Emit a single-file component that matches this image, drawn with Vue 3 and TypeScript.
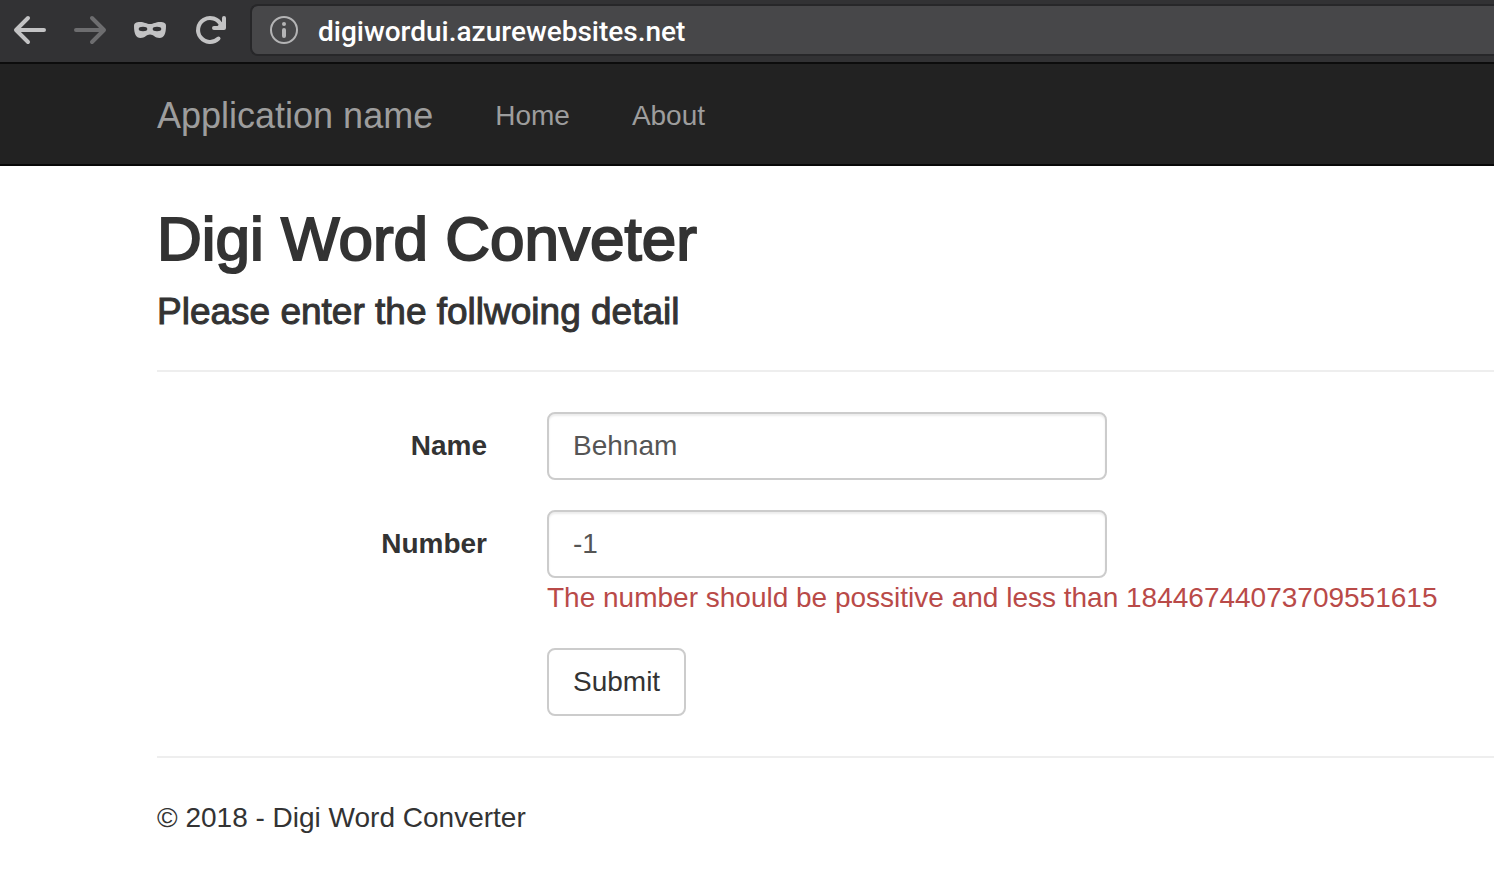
<script setup lang="ts">
import { ref } from 'vue'

const address = ref('digiwordui.azurewebsites.net')
const name = ref('Behnam')
const number = ref('-1')
const numberError = 'The number should be possitive and less than 18446744073709551615'
</script>

<template>
  <div class="page">
    <div class="toolbar">
      <button class="tool" type="button" aria-label="Back">
        <svg width="40" height="40" viewBox="0 0 40 40" fill="none" stroke="#c3c3c4" stroke-width="4" stroke-linecap="round" stroke-linejoin="round">
          <path d="M34 20H7M18 8L6 20L18 32" />
        </svg>
      </button>
      <button class="tool" type="button" aria-label="Forward">
        <svg width="40" height="40" viewBox="0 0 40 40" fill="none" stroke="#6d6d6f" stroke-width="4" stroke-linecap="round" stroke-linejoin="round">
          <path d="M6 20H33M22 8L34 20L22 32" />
        </svg>
      </button>
      <svg class="mask" width="40" height="40" viewBox="0 0 40 40" aria-hidden="true">
        <path fill="#c3c3c4" d="M4 16C4 13 6 12 10 12C14.500 12 16.500 14 20 14C23.500 14 25.500 12 30 12C34 12 36 13 36 16C36 24 34 28 29.500 28C25 28 23.500 24.500 20 24.500C16.500 24.500 15 28 10.500 28C6 28 4 24 4 16Z" />
        <ellipse cx="13" cy="19" rx="4.300" ry="2.200" fill="#323234" />
        <ellipse cx="27" cy="19" rx="4.300" ry="2.200" fill="#323234" />
      </svg>
      <button class="tool" type="button" aria-label="Reload">
        <svg width="40" height="40" viewBox="0 0 40 40" fill="none" stroke="#c3c3c4" stroke-width="4" stroke-linecap="round" stroke-linejoin="round">
          <path d="M28.500 28.500A12 12 0 1 1 31 15" />
          <path d="M34 8V18H24" />
          <path d="M33 12V17H28Z" fill="#c3c3c4" stroke-width="2" />
        </svg>
      </button>
      <div class="address">
        <svg width="28" height="28" viewBox="0 0 28 28" fill="none" aria-hidden="true">
          <circle cx="14" cy="14" r="13" stroke="#b4b4b5" stroke-width="2" />
          <circle cx="14" cy="8" r="2" fill="#b4b4b5" />
          <path d="M14 14V20" stroke="#b4b4b5" stroke-width="4" stroke-linecap="round" />
        </svg>
        <input v-model="address" class="url" type="text" aria-label="Address" spellcheck="false">
      </div>
    </div>

    <nav class="navbar">
      <a class="brand" href="#">Application name</a>
      <a href="#">Home</a>
      <a href="#">About</a>
    </nav>

    <main>
      <h2>Digi Word Conveter</h2>
      <h4>Please enter the follwoing detail</h4>
      <hr>
      <form @submit.prevent>
        <label for="name">Name</label>
        <div><input id="name" v-model="name" class="control" type="text"></div>
        <label for="number">Number</label>
        <div>
          <input id="number" v-model="number" class="control" type="text" aria-describedby="number-error">
          <span id="number-error" class="error">{{ numberError }}</span>
        </div>
        <button class="submit" type="submit">Submit</button>
      </form>
      <hr>
      <footer>© 2018 - Digi Word Converter</footer>
    </main>
  </div>
</template>

<style>
body {
  margin: 0;
  background: #fff;
}
</style>

<style scoped>
.page {
  font-family: "Liberation Sans", Arial, sans-serif;
  font-size: 28px;
  line-height: 40px;
  color: #333;
  overflow-x: hidden;
}

.page * {
  box-sizing: border-box;
}

.toolbar {
  display: flex;
  align-items: center;
  gap: 20px;
  height: 64px;
  padding: 0 0 2px 10px;
  background: #323234;
  border-bottom: 2px solid #0c0c0c;
}

.tool {
  display: block;
  height: 40px;
  padding: 0;
  border: 0;
  background: none;
}

.tool svg,
.mask {
  display: block;
  flex: none;
}

.address {
  display: flex;
  flex: 1;
  align-items: center;
  gap: 20px;
  height: 52px;
  padding-left: 18px;
  background: #474749;
  border: 2px solid #272729;
  border-right: 0;
  border-radius: 8px 0 0 8px;
}

.url {
  flex: 1;
  min-width: 0;
  height: 40px;
  padding: 2px 0 0;
  border: 0;
  outline: 0;
  background: none;
  color: #fff;
  font: 500 28px/38px Roboto, sans-serif;
}

.navbar {
  display: flex;
  align-items: center;
  gap: 62px;
  height: 102px;
  padding: 4px 0 0 157px;
  background: #222;
  border-bottom: 2px solid #080808;
}

.navbar a {
  color: #9d9d9d;
  text-decoration: none;
  white-space: nowrap;
}

.navbar .brand {
  font-size: 36px;
}

main {
  padding: 40px 0 38px 157px;
}

h2,
h4 {
  margin: 0 0 20px;
  font-weight: 500;
  -webkit-text-stroke: 1px #333;
}

h2 {
  font-size: 62px;
  line-height: 66px;
  -webkit-text-stroke-width: 2px;
}

h4 {
  margin-bottom: 38px;
  font-size: 37px;
  line-height: 40px;
}

hr {
  margin: 0 0 40px;
  border: 0;
  border-top: 2px solid #eee;
}

form {
  display: grid;
  grid-template-columns: 330px 1fr;
  gap: 30px 60px;
  margin-bottom: 40px;
}

label {
  padding-top: 14px;
  font-weight: 700;
  text-align: right;
}

.control {
  display: block;
  width: 560px;
  max-width: 100%;
  height: 68px;
  padding: 12px 24px;
  border: 2px solid #ccc;
  border-radius: 8px;
  outline: 0;
  background: #fff;
  box-shadow: inset 0 2px 2px rgba(0, 0, 0, 0.075);
  color: #555;
  font: inherit;
}

.error {
  display: block;
  color: #b94a48;
}

.submit {
  grid-column: 2;
  justify-self: start;
  height: 68px;
  padding: 12px 24px;
  border: 2px solid #ccc;
  border-radius: 8px;
  background: #fff;
  color: #333;
  font: inherit;
}
</style>
